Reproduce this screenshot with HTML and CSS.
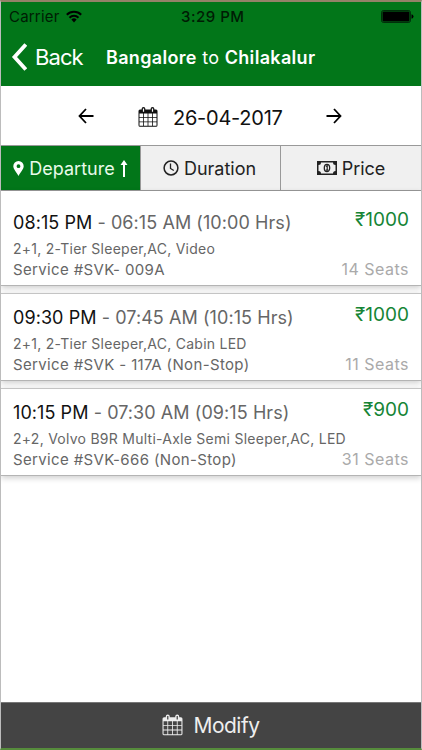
FILE: index.html
```
<!DOCTYPE html>
<html lang="en">
<head>
    <meta charset="UTF-8">
    <meta name="viewport" content="width=device-width, initial-scale=1.0">
    <title>Bangalore to Chilakalur</title>
    <link rel="stylesheet" href="styles.css">
</head>
<body>
    <svg class="defs" width="0" height="0">
        <symbol id="calendar" viewBox="0 0 20 20">
            <path fill="currentColor" fill-rule="evenodd" d="M2 2.500h1.600V2a1.900 1.900 0 0 1 3.800 0v.5h5.200V2a1.900 1.900 0 0 1 3.800 0v.5H18A1.500 1.500 0 0 1 19.500 4v14.300A1.500 1.500 0 0 1 18 19.800H2A1.500 1.500 0 0 1 .5 18.300V4A1.500 1.500 0 0 1 2 2.500zM4.900 1.500v3.200h1.200V1.500zM13.900 1.500v3.200h1.200V1.500zM1.500 6.500v3.500h3.600V6.500zM5.900 6.500v3.500h3.700V6.500zM10.400 6.500v3.500h3.700V6.500zM14.900 6.500v3.500h3.600V6.500zM1.500 10.800v3.600h3.600v-3.600zM5.900 10.800v3.600h3.700v-3.600zM10.400 10.800v3.600h3.700v-3.600zM14.900 10.800v3.600h3.600v-3.600zM1.500 15.200v3.500h3.600v-3.500zM5.900 15.200v3.500h3.700v-3.500zM10.400 15.200v3.500h3.700v-3.500zM14.900 15.200v3.500h3.600v-3.500z"/>
        </symbol>
    </svg>
    <div class="phone">
        <header class="header">
            <div class="status">
                <span class="carrier">Carrier</span>
                <svg class="wifi" width="16" height="13" viewBox="0 0 16 13">
                    <g fill="none" stroke="#000" stroke-width="2">
                        <path d="M.8 4.700a10.200 10.200 0 0 1 14.400 0"/>
                        <path d="M3.500 7.700a6.300 6.300 0 0 1 9 0"/>
                    </g>
                    <path d="M5.400 9.600a3.700 3.700 0 0 1 5.200 0L8 12.400z"/>
                </svg>
                <span class="clock">3:29 PM</span>
                <svg class="battery" width="33" height="13" viewBox="0 0 33 13">
                    <rect x=".5" y=".5" width="29" height="12" rx="2" fill="none" stroke="#000" stroke-opacity=".6"/>
                    <rect x="1.500" y="1.500" width="27" height="10" rx="1"/>
                    <path d="M30.500 4.200q2 .5 2 2.300t-2 2.300z"/>
                </svg>
            </div>
            <div class="nav">
                <svg class="chevron" width="17" height="28" viewBox="0 0 17 28">
                    <path d="M15.800 1.500 4.500 14l11.300 12.500" fill="none" stroke="#fff" stroke-width="3.800"/>
                </svg>
                <span class="back">Back</span>
                <span class="title"><b>Bangalore</b> to <b>Chilakalur</b></span>
            </div>
        </header>

        <div class="date-bar">
            <svg class="arrow" width="16" height="16" viewBox="0 0 16 16">
                <path d="M8 1 1.500 8 8 15M1.500 8h14" fill="none" stroke="#000" stroke-width="1.800"/>
            </svg>
            <svg class="date-icon" width="20" height="20"><use href="#calendar"/></svg>
            <span class="date">26-04-2017</span>
            <svg class="arrow" width="16" height="16" viewBox="0 0 16 16">
                <path d="M8 1l6.500 7L8 15M14.500 8h-14" fill="none" stroke="#000" stroke-width="1.800"/>
            </svg>
        </div>

        <div class="tabs">
            <div class="tab active">
                <svg width="11" height="15" viewBox="0 0 11 15">
                    <path fill="#fff" fill-rule="evenodd" d="M5.500 0A5.200 5.200 0 0 1 10.700 5.200C10.700 8 7.500 11 5.500 15 3.500 11 .3 8 .3 5.200A5.200 5.200 0 0 1 5.500 0zm0 3.300a1.900 1.900 0 1 0 0 3.800 1.900 1.900 0 0 0 0-3.800z"/>
                </svg>
                <span>Departure</span>
                <svg class="sort" width="8" height="17" viewBox="0 0 8 17">
                    <path fill="#fff" d="M4 0l3.500 5H5v12H3V5H.5z"/>
                </svg>
            </div>
            <div class="tab duration">
                <svg width="16" height="16" viewBox="0 0 16 16">
                    <circle cx="8" cy="8" r="6.900" fill="none" stroke="#222" stroke-width="1.500"/>
                    <path d="M7.500 3.500v5l3.300 2" fill="none" stroke="#222" stroke-width="1.300"/>
                </svg>
                <span>Duration</span>
            </div>
            <div class="tab price">
                <svg width="20" height="14" viewBox="0 0 20 14">
                    <path fill="#222" fill-rule="evenodd" d="M0 0h20v14H0zM4 1.500A2.500 2.500 0 0 1 1.500 4v6A2.500 2.500 0 0 1 4 12.500h12A2.500 2.500 0 0 1 18.500 10V4A2.500 2.500 0 0 1 16 1.500z"/>
                    <ellipse cx="10" cy="7" rx="2.700" ry="3.700" fill="#f0f0f0" stroke="#222" stroke-width="1.300"/>
                    <path d="M8.900 5.600l1.300-1v4.600M8.800 9.200h2.600" fill="none" stroke="#222" stroke-width="1.200"/>
                </svg>
                <span>Price</span>
            </div>
        </div>

        <main class="services">
            <div class="card first">
                <div class="row">
                    <div class="time"><span>08:15 PM</span> - 06:15 AM (10:00 Hrs)</div>
                    <div class="fare">₹1000</div>
                </div>
                <div class="bus">2+1, 2-Tier Sleeper,AC, Video</div>
                <div class="row">
                    <div class="service">Service #SVK- 009A</div>
                    <div class="seats">14 Seats</div>
                </div>
            </div>
            <div class="card">
                <div class="row">
                    <div class="time"><span>09:30 PM</span> - 07:45 AM (10:15 Hrs)</div>
                    <div class="fare">₹1000</div>
                </div>
                <div class="bus">2+1, 2-Tier Sleeper,AC, Cabin LED</div>
                <div class="row">
                    <div class="service">Service #SVK - 117A (Non-Stop)</div>
                    <div class="seats">11 Seats</div>
                </div>
            </div>
            <div class="card">
                <div class="row">
                    <div class="time"><span>10:15 PM</span> - 07:30 AM (09:15 Hrs)</div>
                    <div class="fare">₹900</div>
                </div>
                <div class="bus">2+2, Volvo B9R Multi-Axle Semi Sleeper,AC, LED</div>
                <div class="row">
                    <div class="service">Service #SVK-666 (Non-Stop)</div>
                    <div class="seats">31 Seats</div>
                </div>
            </div>
        </main>

        <footer class="modify">
            <svg width="21" height="22"><use href="#calendar"/></svg>
            <span>Modify</span>
        </footer>
    </div>
</body>
</html>
```
FILE: styles.css
```
* {
    box-sizing: border-box;
}
body {
    margin: 0;
    font-family: Inter, "Liberation Sans", sans-serif;
    background-color: #fff;
}
.defs {
    position: absolute;
}
svg {
    display: block;
    flex: none;
}
.phone {
    display: flex;
    flex-direction: column;
    width: 422px;
    height: 750px;
    border: 1px solid #bcbcbc;
    border-top: 2px solid #948268;
    border-bottom: 2px solid #568c3c;
    overflow: hidden;
    white-space: nowrap;
}
.header {
    height: 84px;
    background-color: #027619;
    color: #fff;
}
.status {
    display: flex;
    align-items: center;
    height: 28px;
    padding: 0 7px 0 8px;
    color: #001c04;
    font-size: 15px;
}
.carrier {
    width: 57px;
    letter-spacing: 0.2px;
}
.clock {
    margin-left: 99px;
    font-weight: 500;
    letter-spacing: 0.5px;
}
.battery {
    margin-left: auto;
}
.nav {
    display: flex;
    align-items: center;
    height: 54px;
    padding-left: 9px;
}
.back {
    width: 71px;
    margin-left: 8px;
    font-size: 22px;
    letter-spacing: -0.9px;
}
.title {
    font-size: 18px;
    letter-spacing: 0.32px;
}
.title b {
    font-weight: 600;
}
.date-bar {
    display: flex;
    align-items: center;
    height: 59px;
    padding: 0 79px 0 77px;
    color: #111;
}
.date-icon {
    margin: 3px 0 0 44px;
}
.date {
    margin: 4px auto 0 15px;
    font-size: 20px;
    letter-spacing: -0.25px;
}
.tabs {
    display: grid;
    grid-template-columns: 139px 140px 1fr;
    flex: none;
    height: 46px;
    border-top: 1px solid #999;
    border-bottom: 1px solid #999;
}
.tab {
    display: flex;
    align-items: center;
    justify-content: center;
    gap: 5px;
    background-color: #f0f0f0;
    color: #222;
    font-size: 18px;
}
.tab + .tab {
    border-left: 1px solid #999;
}
.tab.active {
    background-color: #027619;
    color: #e9fbea;
}
.tab.duration {
    padding-right: 2px;
}
.services {
    flex: 1;
}
.card {
    height: 88px;
    margin-bottom: 7px;
    padding: 11px 12px 0 12px;
    border-top: 1px solid #c4c4c4;
    border-bottom: 1px solid #b4b4b4;
    box-shadow: 0 2px 6px rgba(0, 0, 0, 0.2);
    color: #666;
}
.card.first {
    height: 95px;
    padding-top: 19px;
    border-top: 0;
}
.row {
    display: flex;
    justify-content: space-between;
}
.time {
    height: 29px;
    padding-top: 1px;
    font-size: 18px;
    line-height: 24px;
    letter-spacing: 0.07px;
}
.time span {
    color: #111;
}
.fare {
    color: #168536;
    font-size: 19px;
    line-height: 20px;
}
.bus {
    font-size: 14px;
    line-height: 20px;
    letter-spacing: 0.26px;
}
.service {
    font-size: 15px;
    line-height: 21px;
    letter-spacing: 0.36px;
}
.seats {
    color: #aaa;
    font-size: 16px;
    line-height: 21px;
    letter-spacing: 0.5px;
}
.modify {
    display: flex;
    align-items: center;
    justify-content: center;
    gap: 10px;
    height: 46px;
    padding-bottom: 1px;
    border-top: 1px solid #777;
    background-color: #444;
    color: #eee;
    font-size: 21px;
    letter-spacing: -0.5px;
}
```
